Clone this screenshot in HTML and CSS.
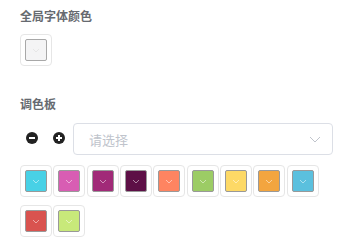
FILE: index.html
```html
<!DOCTYPE html>
<html lang="zh-CN">
<head>
  <meta charset="UTF-8" />
  <title>颜色设置</title>
  <link rel="stylesheet" href="styles.css">
</head>
<body>
  <div class="panel">
    <div class="label">全局字体颜色</div>
    <div class="picker">
      <div class="swatch empty">
        <svg class="arrow" viewBox="0 0 8 5"><path d="M1 1l3 3 3-3" /></svg>
      </div>
    </div>

    <div class="label second">调色板</div>
    <div class="tools">
      <svg class="tool" viewBox="0 0 12 12"><circle cx="6" cy="6" r="6" /><rect x="3" y="5" width="6" height="2" fill="#fff" /></svg>
      <svg class="tool" viewBox="0 0 12 12"><circle cx="6" cy="6" r="6" /><rect x="3" y="5" width="6" height="2" fill="#fff" /><rect x="5" y="3" width="2" height="6" fill="#fff" /></svg>
      <div class="select">
        <span class="placeholder">请选择</span>
        <svg class="caret" viewBox="0 0 12 7"><path d="M1 1l5 5 5-5" /></svg>
      </div>
    </div>

    <div class="palette" id="palette"></div>
  </div>

  <script>
    const colors = ['#48d1e6', '#d85db3', '#a12a78', '#5d0f46', '#fe8461', '#9ccc65',
                    '#fdd966', '#f3a53f', '#5bc0de', '#d9534f', '#c8e97a'];
    const palette = document.getElementById('palette');
    colors.forEach(c => {
      const p = document.createElement('div');
      p.className = 'picker';
      p.innerHTML = `
        <div class="swatch" style="background: ${c}">
          <svg class="arrow" viewBox="0 0 8 5"><path d="M1 1l3 3 3-3" /></svg>
        </div>`;
      palette.appendChild(p);
    });
  </script>
</body>
</html>
```

FILE: styles.css
```css
body {
  margin: 0;
  background: #fff;
  font-family: 'Noto Sans CJK SC', 'Noto Sans', sans-serif;
  color: #606266;
}
.panel {
  padding: 7px 12px 0 20px;
}
.label {
  font-size: 12px;
  font-weight: 700;
  line-height: 17px;
  color: #666a70;
  margin-bottom: 10px;
}
.label.second {
  margin-top: 29px;
  margin-bottom: 11px;
}
.picker {
  width: 32px;
  height: 32px;
  box-sizing: border-box;
  padding: 4px;
  border: 1px solid #e6e6e6;
  border-radius: 4px;
}
.swatch {
  width: 100%;
  height: 100%;
  box-sizing: border-box;
  border: 1px solid #999;
  border-radius: 2px;
  display: flex;
  align-items: center;
  justify-content: center;
}
.swatch.empty {
  background: #f4f4f5;
  border-color: #a8a8a8;
}
.arrow {
  width: 8px;
  height: 5px;
  fill: none;
  stroke: rgba(255, 255, 255, 0.5);
  stroke-width: 1;
}
.swatch.empty .arrow {
  stroke: #e6e6e6;
}
.tools {
  display: flex;
  align-items: center;
  height: 32px;
  padding-left: 6px;
}
.tool {
  width: 12px;
  height: 12px;
  fill: #222;
  margin-top: -3px;
}
.tool + .tool {
  margin-left: 15px;
}
.select {
  flex: 1;
  height: 32px;
  box-sizing: border-box;
  margin-left: 8px;
  border: 1px solid #dcdfe6;
  border-radius: 4px;
  display: flex;
  align-items: center;
  justify-content: space-between;
  padding: 0 11px 0 15px;
}
.placeholder {
  font-size: 13px;
  color: #c0c4cc;
}
.caret {
  width: 12px;
  height: 7px;
  fill: none;
  stroke: #c0c4cc;
  stroke-width: 1;
}
.palette {
  display: flex;
  flex-wrap: wrap;
  column-gap: 1.33px;
  row-gap: 8px;
  margin-top: 10px;
}
```
